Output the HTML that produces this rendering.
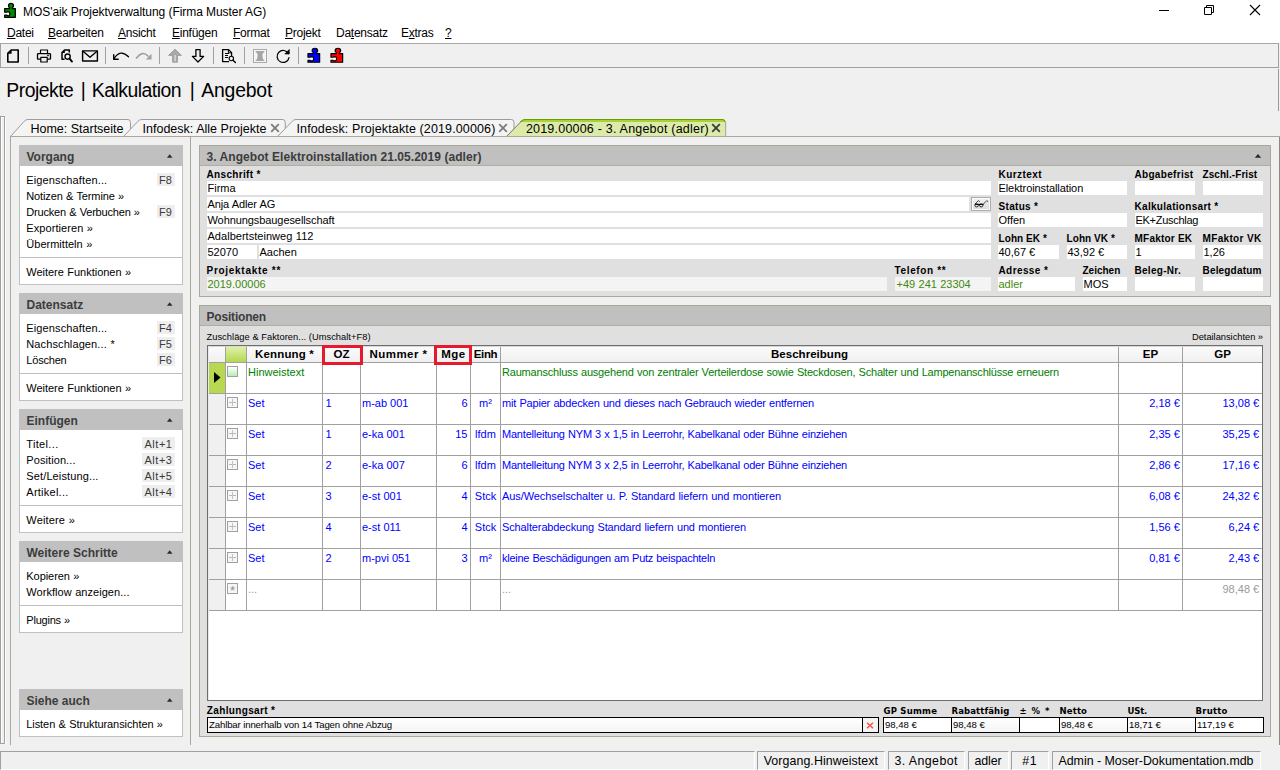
<!DOCTYPE html>
<html lang="de"><head><meta charset="utf-8"><title>MOS'aik Projektverwaltung (Firma Muster AG)</title>
<style>
html,body{margin:0;padding:0;}
body{width:1280px;height:770px;overflow:hidden;background:#f0f0f0;position:relative;font-family:"Liberation Sans",sans-serif;font-size:11px;}
#app div,#app span,#app svg{position:absolute;box-sizing:border-box;}
#app{position:absolute;left:0;top:0;width:1280px;height:770px;overflow:hidden;}
.t{white-space:nowrap;}
u{text-decoration:underline;text-underline-offset:1px;}
</style></head><body><div id="app">
<div style="left:0px;top:0px;width:1280px;height:43px;background:#ffffff;"></div>
<svg style="left:2px;top:1px" width="16" height="18" viewBox="0 0 16 18"><path d="M2.7 7.6H7.6V6.6Q6.3 5.8 6.5 4.3Q6.8 2.3 9 2.3Q11.2 2.3 11.5 4.3Q11.7 5.8 10.4 6.6V7.6H13.3V16.3H2.7V14.2H4.8Q5.3 14.9 6.2 14.9Q7.9 14.8 7.9 12.7Q7.9 10.7 6.2 10.6Q5.3 10.6 4.8 11.2H2.7Z" fill="#008a00" stroke="#000" stroke-width="1.3" stroke-linejoin="round"/></svg>
<span class="t " style="top:3.84px;font-size:12px;line-height:16px;color:#000;left:23px;letter-spacing:-0.06px;">MOS'aik Projektverwaltung (Firma Muster AG)</span>
<svg style="left:1155px;top:0px" width="120" height="24" viewBox="0 0 120 24"><path d="M4 10.5h10" stroke="#000" stroke-width="1" fill="none"/><path d="M49.5 7.5h7v7h-7z M51.5 7.5v-2h7v7h-2" stroke="#000" stroke-width="1" fill="none"/><path d="M95 5l10 10M105 5l-10 10" stroke="#000" stroke-width="1.1" fill="none"/></svg>
<span class="t " style="top:24.84px;font-size:12px;line-height:16px;color:#000;left:7px;letter-spacing:-0.25px;"><u>D</u>atei</span>
<span class="t " style="top:24.84px;font-size:12px;line-height:16px;color:#000;left:48px;letter-spacing:-0.25px;"><u>B</u>earbeiten</span>
<span class="t " style="top:24.84px;font-size:12px;line-height:16px;color:#000;left:118px;letter-spacing:-0.25px;"><u>A</u>nsicht</span>
<span class="t " style="top:24.84px;font-size:12px;line-height:16px;color:#000;left:172px;letter-spacing:-0.25px;"><u>E</u>infügen</span>
<span class="t " style="top:24.84px;font-size:12px;line-height:16px;color:#000;left:233px;letter-spacing:-0.25px;"><u>F</u>ormat</span>
<span class="t " style="top:24.84px;font-size:12px;line-height:16px;color:#000;left:285px;letter-spacing:-0.25px;"><u>P</u>rojekt</span>
<span class="t " style="top:24.84px;font-size:12px;line-height:16px;color:#000;left:336px;letter-spacing:-0.25px;">Da<u>t</u>ensatz</span>
<span class="t " style="top:24.84px;font-size:12px;line-height:16px;color:#000;left:401px;letter-spacing:-0.25px;">E<u>x</u>tras</span>
<span class="t " style="top:24.84px;font-size:12px;line-height:16px;color:#000;left:445px;letter-spacing:-0.25px;"><u>?</u></span>
<div style="left:0px;top:43px;width:1279px;height:25px;background:#f0f0f0;border:1px solid #a0a0a0;border-top-color:#a6a6a6;"></div>
<div style="left:28px;top:47px;width:1px;height:17px;background:#a0a0a0;"></div>
<div style="left:105px;top:47px;width:1px;height:17px;background:#a0a0a0;"></div>
<div style="left:159px;top:47px;width:1px;height:17px;background:#a0a0a0;"></div>
<div style="left:213px;top:47px;width:1px;height:17px;background:#a0a0a0;"></div>
<div style="left:244px;top:47px;width:1px;height:17px;background:#a0a0a0;"></div>
<div style="left:298px;top:47px;width:1px;height:17px;background:#a0a0a0;"></div>
<span class="t " style="top:78.58px;font-size:19.4px;line-height:23.4px;color:#000;left:6.3px;letter-spacing:-0.518px;">Projekte</span>
<span class="t " style="top:78.58px;font-size:19.4px;line-height:23.4px;color:#000;left:80.8px;">|</span>
<span class="t " style="top:78.58px;font-size:19.4px;line-height:23.4px;color:#000;left:91.7px;letter-spacing:-0.489px;">Kalkulation</span>
<span class="t " style="top:78.58px;font-size:19.4px;line-height:23.4px;color:#000;left:189.8px;">|</span>
<span class="t " style="top:78.58px;font-size:19.4px;line-height:23.4px;color:#000;left:201.2px;letter-spacing:-0.179px;">Angebot</span>
<div style="left:0px;top:116px;width:5px;height:628px;background:#f0f0f0;border:1px solid #a0a0a0;box-shadow:inset 1px 1px 0 #ffffff;"></div>
<div style="left:5px;top:117px;width:1px;height:627px;background:#ffffff;"></div>
<div style="left:10px;top:136px;width:1270px;height:1px;background:#aca899;"></div>
<svg style="left:10px;top:119px" width="129" height="18" viewBox="0 0 129 18"><path d="M0.5 17.5 L14.0 2.5 Q15.5 0.5 18.0 0.5 H118 Q120.5 0.5 120.5 3.5 V17.5 Z" fill="#f4f4f4" stroke="none"/><path d="M0.5 17.5 L14.0 2.5 Q15.5 0.5 18.0 0.5 H118 Q120.5 0.5 120.5 3.5 V17.5" fill="none" stroke="#9c9c9c" stroke-width="1"/><path d="M0 17.5H121" stroke="#aca899" stroke-width="1" fill="none"/></svg>
<span class="t " style="top:121.42px;font-size:12.5px;line-height:16.5px;color:#000;left:30.5px;letter-spacing:-0.006px;">Home: Startseite</span>
<svg style="left:122.5px;top:119px" width="170.75" height="18" viewBox="0 0 170.75 18"><path d="M0.5 17.5 L14.75 2.5 Q16.25 0.5 18.75 0.5 H159.75 Q162.25 0.5 162.25 3.5 V17.5 Z" fill="#f4f4f4" stroke="none"/><path d="M0.5 17.5 L14.75 2.5 Q16.25 0.5 18.75 0.5 H159.75 Q162.25 0.5 162.25 3.5 V17.5" fill="none" stroke="#9c9c9c" stroke-width="1"/><path d="M0 17.5H162.75" stroke="#aca899" stroke-width="1" fill="none"/></svg>
<span class="t " style="top:121.42px;font-size:12.5px;line-height:16.5px;color:#000;left:142.5px;letter-spacing:0.014px;">Infodesk: Alle Projekte</span>
<svg style="left:270.1px;top:123.1px" width="10" height="10" viewBox="0 0 10 10"><path d="M1.2 1.2L8.8 8.8M8.8 1.2L1.2 8.8" stroke="#7c7c7c" stroke-width="1.8" fill="none"/></svg>
<svg style="left:276.5px;top:119px" width="245.5" height="18" viewBox="0 0 245.5 18"><path d="M0.5 17.5 L15.0 2.5 Q16.5 0.5 19.0 0.5 H234.5 Q237.0 0.5 237.0 3.5 V17.5 Z" fill="#f4f4f4" stroke="none"/><path d="M0.5 17.5 L15.0 2.5 Q16.5 0.5 19.0 0.5 H234.5 Q237.0 0.5 237.0 3.5 V17.5" fill="none" stroke="#9c9c9c" stroke-width="1"/><path d="M0 17.5H237.5" stroke="#aca899" stroke-width="1" fill="none"/></svg>
<span class="t " style="top:121.42px;font-size:12.5px;line-height:16.5px;color:#000;left:296.5px;letter-spacing:0.130px;">Infodesk: Projektakte (2019.00006)</span>
<svg style="left:498.40000000000003px;top:123.1px" width="10" height="10" viewBox="0 0 10 10"><path d="M1.2 1.2L8.8 8.8M8.8 1.2L1.2 8.8" stroke="#7c7c7c" stroke-width="1.8" fill="none"/></svg>
<svg style="left:505.8px;top:119px" width="228.2" height="18" viewBox="0 0 228.2 18"><path d="M0.5 17.5 L15.099999999999966 2.5 Q16.599999999999966 0.5 19.099999999999966 0.5 H217.2 Q219.7 0.5 219.7 3.5 V17.5 Z" fill="#dcebaa" stroke="none"/><path d="M14.599999999999966 2.2 L17.099999999999966 1 H218.0 L219.79999999999998 2.6 L219.79999999999998 3 H13.799999999999965Z" fill="#a9d13c"/><path d="M0.5 17.5 L14.399999999999967 3.2" fill="none" stroke="#72727a" stroke-width="1"/><path d="M14.399999999999967 3.2 L15.099999999999966 2.5 Q16.599999999999966 0.5 19.099999999999966 0.5 H217.2 L219.39999999999998 2.6" fill="none" stroke="#6b9c00" stroke-width="1.1"/><path d="M219.7 3 V17.5" fill="none" stroke="#a2a2aa" stroke-width="1"/><path d="M0 17.5H220.2" stroke="#aca899" stroke-width="1" fill="none"/></svg>
<span class="t " style="top:121.42px;font-size:12.5px;line-height:16.5px;color:#000;left:525.9px;letter-spacing:0.209px;">2019.00006 - 3. Angebot (adler)</span>
<svg style="left:711.1px;top:123.1px" width="10" height="10" viewBox="0 0 10 10"><path d="M1.2 1.2L8.8 8.8M8.8 1.2L1.2 8.8" stroke="#3c3c3c" stroke-width="1.8" fill="none"/></svg>
<div style="left:10px;top:137px;width:1px;height:608px;background:#aca899;"></div>
<div style="left:190px;top:137px;width:1px;height:608px;background:#aca899;"></div>
<div style="left:19px;top:145px;width:164px;height:140px;background:#ffffff;border:1px solid #c0c0c0;"></div>
<div style="left:19px;top:145px;width:164px;height:21px;background:#c0c0c0;"></div>
<span class="t sbh" style="top:148.84px;font-size:12px;line-height:16px;color:#3c3c3c;font-weight:bold;left:26.5px;">Vorgang</span>
<svg style="left:164px;top:153px" width="10" height="6" viewBox="0 0 10 6"><path d="M2.9 4.7L5.7 1.3L8.5 4.7Z" fill="#2a2a2a"/></svg>
<span class="t " style="top:172.69px;font-size:11px;line-height:15px;color:#000;left:26.3px;letter-spacing:0.132px;">Eigenschaften...</span>
<div style="left:157px;top:173px;width:18px;height:13px;background:#eeeeee;"></div>
<span class="t " style="top:172.69px;font-size:11px;line-height:15px;color:#3a3a3a;right:1108px;letter-spacing:0.078px;">F8</span>
<span class="t " style="top:188.69px;font-size:11px;line-height:15px;color:#000;left:26.3px;word-spacing:0.4px;letter-spacing:-0.121px;">Notizen &amp; Termine »</span>
<span class="t " style="top:204.69px;font-size:11px;line-height:15px;color:#000;left:26.3px;word-spacing:0.4px;letter-spacing:-0.185px;">Drucken &amp; Verbuchen »</span>
<div style="left:157px;top:205px;width:18px;height:13px;background:#eeeeee;"></div>
<span class="t " style="top:204.69px;font-size:11px;line-height:15px;color:#3a3a3a;right:1108px;letter-spacing:0.078px;">F9</span>
<span class="t " style="top:220.69px;font-size:11px;line-height:15px;color:#000;left:26.3px;word-spacing:0.4px;letter-spacing:0.071px;">Exportieren »</span>
<span class="t " style="top:236.69px;font-size:11px;line-height:15px;color:#000;left:26.3px;word-spacing:0.4px;letter-spacing:0.013px;">Übermitteln »</span>
<div style="left:20px;top:257px;width:162px;height:1px;background:#c0c0c0;"></div>
<span class="t " style="top:264.69px;font-size:11px;line-height:15px;color:#000;left:26.3px;word-spacing:0.4px;letter-spacing:-0.020px;">Weitere Funktionen »</span>
<div style="left:19px;top:293px;width:164px;height:108px;background:#ffffff;border:1px solid #c0c0c0;"></div>
<div style="left:19px;top:293px;width:164px;height:21px;background:#c0c0c0;"></div>
<span class="t sbh" style="top:296.84px;font-size:12px;line-height:16px;color:#3c3c3c;font-weight:bold;left:26.5px;">Datensatz</span>
<svg style="left:164px;top:301px" width="10" height="6" viewBox="0 0 10 6"><path d="M2.9 4.7L5.7 1.3L8.5 4.7Z" fill="#2a2a2a"/></svg>
<span class="t " style="top:320.69px;font-size:11px;line-height:15px;color:#000;left:26.3px;letter-spacing:0.132px;">Eigenschaften...</span>
<div style="left:157px;top:321px;width:18px;height:13px;background:#eeeeee;"></div>
<span class="t " style="top:320.69px;font-size:11px;line-height:15px;color:#3a3a3a;right:1108px;letter-spacing:0.078px;">F4</span>
<span class="t " style="top:336.69px;font-size:11px;line-height:15px;color:#000;left:26.3px;word-spacing:0.4px;letter-spacing:0.110px;">Nachschlagen... *</span>
<div style="left:157px;top:337px;width:18px;height:13px;background:#eeeeee;"></div>
<span class="t " style="top:336.69px;font-size:11px;line-height:15px;color:#3a3a3a;right:1108px;letter-spacing:0.078px;">F5</span>
<span class="t " style="top:352.69px;font-size:11px;line-height:15px;color:#000;left:26.3px;letter-spacing:-0.192px;">Löschen</span>
<div style="left:157px;top:353px;width:18px;height:13px;background:#eeeeee;"></div>
<span class="t " style="top:352.69px;font-size:11px;line-height:15px;color:#3a3a3a;right:1108px;letter-spacing:0.078px;">F6</span>
<div style="left:20px;top:373px;width:162px;height:1px;background:#c0c0c0;"></div>
<span class="t " style="top:380.69px;font-size:11px;line-height:15px;color:#000;left:26.3px;word-spacing:0.4px;letter-spacing:-0.020px;">Weitere Funktionen »</span>
<div style="left:19px;top:409px;width:164px;height:124px;background:#ffffff;border:1px solid #c0c0c0;"></div>
<div style="left:19px;top:409px;width:164px;height:21px;background:#c0c0c0;"></div>
<span class="t sbh" style="top:412.84px;font-size:12px;line-height:16px;color:#3c3c3c;font-weight:bold;left:26.5px;">Einfügen</span>
<svg style="left:164px;top:417px" width="10" height="6" viewBox="0 0 10 6"><path d="M2.9 4.7L5.7 1.3L8.5 4.7Z" fill="#2a2a2a"/></svg>
<span class="t " style="top:436.69px;font-size:11px;line-height:15px;color:#000;left:26.3px;letter-spacing:0.338px;">Titel...</span>
<div style="left:142px;top:437px;width:33px;height:13px;background:#eeeeee;"></div>
<span class="t " style="top:436.69px;font-size:11px;line-height:15px;color:#3a3a3a;right:1107.5px;letter-spacing:0.522px;">Alt+1</span>
<span class="t " style="top:452.69px;font-size:11px;line-height:15px;color:#000;left:26.3px;letter-spacing:0.085px;">Position...</span>
<div style="left:142px;top:453px;width:33px;height:13px;background:#eeeeee;"></div>
<span class="t " style="top:452.69px;font-size:11px;line-height:15px;color:#3a3a3a;right:1107.5px;letter-spacing:0.522px;">Alt+3</span>
<span class="t " style="top:468.69px;font-size:11px;line-height:15px;color:#000;left:26.3px;letter-spacing:0.128px;">Set/Leistung...</span>
<div style="left:142px;top:469px;width:33px;height:13px;background:#eeeeee;"></div>
<span class="t " style="top:468.69px;font-size:11px;line-height:15px;color:#3a3a3a;right:1107.5px;letter-spacing:0.522px;">Alt+5</span>
<span class="t " style="top:484.69px;font-size:11px;line-height:15px;color:#000;left:26.3px;letter-spacing:0.252px;">Artikel...</span>
<div style="left:142px;top:485px;width:33px;height:13px;background:#eeeeee;"></div>
<span class="t " style="top:484.69px;font-size:11px;line-height:15px;color:#3a3a3a;right:1107.5px;letter-spacing:0.522px;">Alt+4</span>
<div style="left:20px;top:505px;width:162px;height:1px;background:#c0c0c0;"></div>
<span class="t " style="top:512.69px;font-size:11px;line-height:15px;color:#000;left:26.3px;word-spacing:0.4px;letter-spacing:0.163px;">Weitere »</span>
<div style="left:19px;top:541px;width:164px;height:92px;background:#ffffff;border:1px solid #c0c0c0;"></div>
<div style="left:19px;top:541px;width:164px;height:21px;background:#c0c0c0;"></div>
<span class="t sbh" style="top:544.84px;font-size:12px;line-height:16px;color:#3c3c3c;font-weight:bold;left:26.5px;">Weitere Schritte</span>
<svg style="left:164px;top:549px" width="10" height="6" viewBox="0 0 10 6"><path d="M2.9 4.7L5.7 1.3L8.5 4.7Z" fill="#2a2a2a"/></svg>
<span class="t " style="top:568.69px;font-size:11px;line-height:15px;color:#000;left:26.3px;word-spacing:0.4px;letter-spacing:-0.061px;">Kopieren »</span>
<span class="t " style="top:584.69px;font-size:11px;line-height:15px;color:#000;left:26.3px;word-spacing:0.4px;letter-spacing:0.044px;">Workflow anzeigen...</span>
<div style="left:20px;top:605px;width:162px;height:1px;background:#c0c0c0;"></div>
<span class="t " style="top:612.69px;font-size:11px;line-height:15px;color:#000;left:26.3px;word-spacing:0.4px;letter-spacing:-0.217px;">Plugins »</span>
<div style="left:19px;top:689px;width:164px;height:48px;background:#ffffff;border:1px solid #c0c0c0;"></div>
<div style="left:19px;top:689px;width:164px;height:21px;background:#c0c0c0;"></div>
<span class="t sbh" style="top:692.84px;font-size:12px;line-height:16px;color:#3c3c3c;font-weight:bold;left:26.5px;">Siehe auch</span>
<svg style="left:164px;top:697px" width="10" height="6" viewBox="0 0 10 6"><path d="M2.9 4.7L5.7 1.3L8.5 4.7Z" fill="#2a2a2a"/></svg>
<span class="t " style="top:716.69px;font-size:11px;line-height:15px;color:#000;left:26.3px;word-spacing:0.4px;letter-spacing:-0.078px;">Listen &amp; Strukturansichten »</span>
<div style="left:199px;top:145px;width:1072px;height:152px;background:#e0e0e0;border:1px solid #aca899;"></div>
<div style="left:200px;top:146px;width:1070px;height:19px;background:#c0c0c0;"></div>
<div style="left:200px;top:165px;width:1070px;height:1px;background:#b2ae9e;"></div>
<span class="t ph" style="top:148.84px;font-size:12px;line-height:16px;color:#3c3c3c;font-weight:bold;left:206.5px;letter-spacing:0.055px;">3. Angebot Elektroinstallation 21.05.2019 (adler)</span>
<svg style="left:1254px;top:153px" width="8" height="6" viewBox="0 0 8 6"><path d="M0.8 4.7L4 0.9L7.2 4.7Z" fill="#2a2a2a"/></svg>
<span class="t lb" style="top:167.94px;font-size:10px;line-height:14px;color:#000;font-weight:bold;left:206.5px;letter-spacing:0.340px;">Anschrift *</span>
<div style="left:207px;top:181px;width:784px;height:14px;background:#ffffff;"></div>
<span class="t " style="top:180.69px;font-size:11px;line-height:15px;color:#000;left:207.5px;">Firma</span>
<div style="left:207px;top:197px;width:762px;height:14px;background:#ffffff;"></div>
<span class="t " style="top:196.69px;font-size:11px;line-height:15px;color:#000;left:207.5px;word-spacing:0.4px;letter-spacing:-0.131px;">Anja Adler AG</span>
<div style="left:207px;top:213px;width:784px;height:14px;background:#ffffff;"></div>
<span class="t " style="top:212.69px;font-size:11px;line-height:15px;color:#000;left:207.5px;letter-spacing:-0.080px;">Wohnungsbaugesellschaft</span>
<div style="left:207px;top:229px;width:784px;height:14px;background:#ffffff;"></div>
<span class="t " style="top:228.69px;font-size:11px;line-height:15px;color:#000;left:207.5px;word-spacing:0.4px;letter-spacing:0.030px;">Adalbertsteinweg 112</span>
<div style="left:207px;top:245px;width:50px;height:14px;background:#ffffff;"></div>
<span class="t " style="top:244.69px;font-size:11px;line-height:15px;color:#000;left:207.5px;">52070</span>
<div style="left:259px;top:245px;width:732px;height:14px;background:#ffffff;"></div>
<span class="t " style="top:244.69px;font-size:11px;line-height:15px;color:#000;left:259.5px;">Aachen</span>
<span class="t lb" style="top:263.94px;font-size:10px;line-height:14px;color:#000;font-weight:bold;left:206.5px;letter-spacing:0.715px;">Projektakte **</span>
<div style="left:207px;top:277px;width:680px;height:14px;background:#f4f4f4;"></div>
<span class="t " style="top:276.69px;font-size:11px;line-height:15px;color:#428a10;left:207.5px;">2019.00006</span>
<span class="t lb" style="top:263.94px;font-size:10px;line-height:14px;color:#000;font-weight:bold;left:894.5px;letter-spacing:0.651px;">Telefon **</span>
<div style="left:895px;top:277px;width:96px;height:14px;background:#f4f4f4;"></div>
<span class="t " style="top:276.69px;font-size:11px;line-height:15px;color:#428a10;left:896.6px;word-spacing:0.4px;letter-spacing:-0.032px;">+49 241 23304</span>
<div style="left:971px;top:197px;width:20px;height:14px;border:1px solid #adadad;background:linear-gradient(#f2f2f2,#dcdcdc);box-shadow:inset 0 0 0 1px #fafafa;"></div>
<svg style="left:973px;top:199px" width="16" height="10" viewBox="0 0 16 10"><ellipse cx="3.6" cy="6.4" rx="1.7" ry="1.5" stroke="#111" stroke-width="0.9" fill="#e8e8e8"/><ellipse cx="8.2" cy="6.4" rx="1.7" ry="1.5" stroke="#111" stroke-width="0.9" fill="#e8e8e8"/><path d="M1.8 5.4H10.6" stroke="#000" stroke-width="1.1" fill="none"/><path d="M2 5L5.4 1.6L6.8 2.6M10.4 5L13.8 1.6L15.2 2.8" stroke="#333" stroke-width="0.9" fill="none"/></svg>
<span class="t lb" style="top:167.94px;font-size:10px;line-height:14px;color:#000;font-weight:bold;left:998.5px;letter-spacing:0.436px;">Kurztext</span>
<div style="left:998px;top:181px;width:129px;height:14px;background:#ffffff;"></div>
<span class="t " style="top:180.69px;font-size:11px;line-height:15px;color:#000;left:998.5px;letter-spacing:-0.080px;">Elektroinstallation</span>
<span class="t lb" style="top:167.94px;font-size:10px;line-height:14px;color:#000;font-weight:bold;left:1134.5px;letter-spacing:0.312px;">Abgabefrist</span>
<div style="left:1135px;top:181px;width:60px;height:14px;background:#ffffff;"></div>
<span class="t lb" style="top:167.94px;font-size:10px;line-height:14px;color:#000;font-weight:bold;left:1202.5px;letter-spacing:0.070px;">Zschl.-Frist</span>
<div style="left:1203px;top:181px;width:60px;height:14px;background:#ffffff;"></div>
<span class="t lb" style="top:199.94px;font-size:10px;line-height:14px;color:#000;font-weight:bold;left:998.5px;letter-spacing:0.314px;">Status *</span>
<div style="left:998px;top:213px;width:129px;height:14px;background:#ffffff;"></div>
<span class="t " style="top:212.69px;font-size:11px;line-height:15px;color:#000;left:998.5px;">Offen</span>
<span class="t lb" style="top:199.94px;font-size:10px;line-height:14px;color:#000;font-weight:bold;left:1134.5px;letter-spacing:0.299px;">Kalkulationsart *</span>
<div style="left:1135px;top:213px;width:128px;height:14px;background:#ffffff;"></div>
<span class="t " style="top:212.69px;font-size:11px;line-height:15px;color:#000;left:1135.5px;letter-spacing:-0.276px;">EK+Zuschlag</span>
<span class="t lb" style="top:231.94px;font-size:10px;line-height:14px;color:#000;font-weight:bold;left:998.5px;letter-spacing:0.080px;">Lohn EK *</span>
<div style="left:998px;top:245px;width:61px;height:14px;background:#ffffff;"></div>
<span class="t " style="top:244.69px;font-size:11px;line-height:15px;color:#000;left:998.5px;">40,67 €</span>
<span class="t lb" style="top:231.94px;font-size:10px;line-height:14px;color:#000;font-weight:bold;left:1066.5px;letter-spacing:0.080px;">Lohn VK *</span>
<div style="left:1067px;top:245px;width:60px;height:14px;background:#ffffff;"></div>
<span class="t " style="top:244.69px;font-size:11px;line-height:15px;color:#000;left:1067.5px;">43,92 €</span>
<span class="t lb" style="top:231.94px;font-size:10px;line-height:14px;color:#000;font-weight:bold;left:1134.5px;letter-spacing:0.219px;">MFaktor EK</span>
<div style="left:1135px;top:245px;width:60px;height:14px;background:#ffffff;"></div>
<span class="t " style="top:244.69px;font-size:11px;line-height:15px;color:#000;left:1135.5px;">1</span>
<span class="t lb" style="top:231.94px;font-size:10px;line-height:14px;color:#000;font-weight:bold;left:1202.5px;letter-spacing:0.344px;">MFaktor VK</span>
<div style="left:1203px;top:245px;width:60px;height:14px;background:#ffffff;"></div>
<span class="t " style="top:244.69px;font-size:11px;line-height:15px;color:#000;left:1203.5px;">1,26</span>
<span class="t lb" style="top:263.94px;font-size:10px;line-height:14px;color:#000;font-weight:bold;left:998.5px;letter-spacing:0.401px;">Adresse *</span>
<div style="left:998px;top:277px;width:77px;height:14px;background:#ffffff;"></div>
<span class="t " style="top:276.69px;font-size:11px;line-height:15px;color:#428a10;left:998.5px;">adler</span>
<span class="t lb" style="top:263.94px;font-size:10px;line-height:14px;color:#000;font-weight:bold;left:1082.5px;letter-spacing:-0.007px;">Zeichen</span>
<div style="left:1083px;top:277px;width:44px;height:14px;background:#ffffff;"></div>
<span class="t " style="top:276.69px;font-size:11px;line-height:15px;color:#000;left:1083.5px;">MOS</span>
<span class="t lb" style="top:263.94px;font-size:10px;line-height:14px;color:#000;font-weight:bold;left:1134.5px;letter-spacing:0.288px;">Beleg-Nr.</span>
<div style="left:1135px;top:277px;width:60px;height:14px;background:#ffffff;"></div>
<span class="t lb" style="top:263.94px;font-size:10px;line-height:14px;color:#000;font-weight:bold;left:1202.5px;letter-spacing:0.177px;">Belegdatum</span>
<div style="left:1203px;top:277px;width:60px;height:14px;background:#ffffff;"></div>
<div style="left:199px;top:305px;width:1072px;height:432px;background:#e0e0e0;border:1px solid #aca899;"></div>
<div style="left:200px;top:306px;width:1070px;height:19px;background:#c0c0c0;"></div>
<div style="left:200px;top:325px;width:1070px;height:1px;background:#b2ae9e;"></div>
<span class="t ph" style="top:308.84px;font-size:12px;line-height:16px;color:#3c3c3c;font-weight:bold;left:206.5px;letter-spacing:-0.184px;">Positionen</span>
<span class="t " style="top:331.13px;font-size:9.3px;line-height:13.3px;color:#000;left:206.5px;letter-spacing:0.041px;">Zuschläge &amp; Faktoren... (Umschalt+F8)</span>
<span class="t " style="top:331.13px;font-size:9.3px;line-height:13.3px;color:#000;right:17px;letter-spacing:-0.019px;">Detailansichten »</span>
<div style="left:207px;top:345px;width:1056px;height:356px;background:#ffffff;border:1px solid #6e6e6e;"></div>
<div style="left:208px;top:346px;width:1054px;height:1px;background:#d8d8d8;"></div>
<div style="left:208px;top:346px;width:1px;height:354px;background:#e8e8e8;"></div>
<div style="left:209px;top:347px;width:1053px;height:15px;background:linear-gradient(#fbfbfb,#f0f0f0);"></div>
<div style="left:226px;top:347px;width:20px;height:15px;background:linear-gradient(#dff0a8,#b4d84e);"></div>
<div style="left:209px;top:362px;width:1053px;height:1px;background:#a0a0a0;"></div>
<div style="left:225px;top:347px;width:1px;height:264px;background:#a0a0a0;"></div>
<div style="left:246px;top:347px;width:1px;height:264px;background:#a0a0a0;"></div>
<div style="left:322px;top:347px;width:1px;height:264px;background:#a0a0a0;"></div>
<div style="left:360px;top:347px;width:1px;height:264px;background:#a0a0a0;"></div>
<div style="left:436px;top:347px;width:1px;height:264px;background:#a0a0a0;"></div>
<div style="left:470px;top:347px;width:1px;height:264px;background:#a0a0a0;"></div>
<div style="left:500px;top:347px;width:1px;height:264px;background:#a0a0a0;"></div>
<div style="left:1118px;top:347px;width:1px;height:264px;background:#a0a0a0;"></div>
<div style="left:1182px;top:347px;width:1px;height:264px;background:#a0a0a0;"></div>
<div style="left:209px;top:393px;width:1053px;height:1px;background:#a0a0a0;"></div>
<div style="left:209px;top:363px;width:16px;height:30px;background:#f0f0f0;"></div>
<div style="left:209px;top:424px;width:1053px;height:1px;background:#a0a0a0;"></div>
<div style="left:209px;top:394px;width:16px;height:30px;background:#f0f0f0;"></div>
<div style="left:209px;top:455px;width:1053px;height:1px;background:#a0a0a0;"></div>
<div style="left:209px;top:425px;width:16px;height:30px;background:#f0f0f0;"></div>
<div style="left:209px;top:486px;width:1053px;height:1px;background:#a0a0a0;"></div>
<div style="left:209px;top:456px;width:16px;height:30px;background:#f0f0f0;"></div>
<div style="left:209px;top:517px;width:1053px;height:1px;background:#a0a0a0;"></div>
<div style="left:209px;top:487px;width:16px;height:30px;background:#f0f0f0;"></div>
<div style="left:209px;top:548px;width:1053px;height:1px;background:#a0a0a0;"></div>
<div style="left:209px;top:518px;width:16px;height:30px;background:#f0f0f0;"></div>
<div style="left:209px;top:579px;width:1053px;height:1px;background:#a0a0a0;"></div>
<div style="left:209px;top:549px;width:16px;height:30px;background:#f0f0f0;"></div>
<div style="left:209px;top:610px;width:1053px;height:1px;background:#a0a0a0;"></div>
<div style="left:209px;top:580px;width:16px;height:30px;background:#f0f0f0;"></div>
<div style="left:209px;top:363px;width:16px;height:30px;background:#b8d850;"></div>
<svg style="left:214px;top:372px" width="7" height="11" viewBox="0 0 7 11"><path d="M0 0L6.5 5.5L0 11Z" fill="#000"/></svg>
<span class="t " style="top:347.27px;font-size:11.5px;line-height:15.5px;color:#000;font-weight:bold;left:84.5px;width:400px;text-align:center;letter-spacing:0.167px;">Kennung *</span>
<span class="t " style="top:347.27px;font-size:11.5px;line-height:15.5px;color:#000;font-weight:bold;left:141.5px;width:400px;text-align:center;">OZ</span>
<span class="t " style="top:347.27px;font-size:11.5px;line-height:15.5px;color:#000;font-weight:bold;left:198.5px;width:400px;text-align:center;letter-spacing:0.459px;">Nummer *</span>
<span class="t " style="top:347.27px;font-size:11.5px;line-height:15.5px;color:#000;font-weight:bold;left:253.5px;width:400px;text-align:center;letter-spacing:0.467px;">Mge</span>
<span class="t " style="top:347.27px;font-size:11.5px;line-height:15.5px;color:#000;font-weight:bold;left:285.5px;width:400px;text-align:center;letter-spacing:-0.355px;">Einh</span>
<span class="t " style="top:347.27px;font-size:11.5px;line-height:15.5px;color:#000;font-weight:bold;left:609.5px;width:400px;text-align:center;letter-spacing:0.026px;">Beschreibung</span>
<span class="t " style="top:347.27px;font-size:11.5px;line-height:15.5px;color:#000;font-weight:bold;left:950.5px;width:400px;text-align:center;">EP</span>
<span class="t " style="top:347.27px;font-size:11.5px;line-height:15.5px;color:#000;font-weight:bold;left:1022.5px;width:400px;text-align:center;">GP</span>
<span class="t " style="top:364.69px;font-size:11px;line-height:15px;color:#008000;left:248px;">Hinweistext</span>
<span class="t " style="top:364.69px;font-size:11px;line-height:15px;color:#008000;left:502px;word-spacing:0.4px;letter-spacing:-0.196px;">Raumanschluss ausgehend von zentraler Verteilerdose sowie Steckdosen, Schalter und Lampenanschlüsse erneuern</span>
<div style="left:227px;top:366px;width:11px;height:11px;border:1px solid #a0a0a0;background:linear-gradient(#ffffff,#b4f0b4);"></div>
<span class="t " style="top:395.69px;font-size:11px;line-height:15px;color:#0000ff;left:248px;">Set</span>
<span class="t " style="top:395.69px;font-size:11px;line-height:15px;color:#0000ff;left:325.5px;">1</span>
<span class="t " style="top:395.69px;font-size:11px;line-height:15px;color:#0000ff;left:362px;">m-ab 001</span>
<span class="t " style="top:395.69px;font-size:11px;line-height:15px;color:#0000ff;right:812.5px;">6</span>
<span class="t " style="top:395.69px;font-size:11px;line-height:15px;color:#0000ff;left:285.5px;width:400px;text-align:center;">m²</span>
<span class="t " style="top:395.69px;font-size:11px;line-height:15px;color:#0000ff;left:502px;word-spacing:0.4px;letter-spacing:-0.181px;">mit Papier abdecken und dieses nach Gebrauch wieder entfernen</span>
<span class="t " style="top:395.69px;font-size:11px;line-height:15px;color:#0000ff;right:100.20000000000005px;">2,18 €</span>
<span class="t " style="top:395.69px;font-size:11px;line-height:15px;color:#0000ff;right:20.799999999999955px;">13,08 €</span>
<div style="left:227px;top:397px;width:11px;height:11px;background:#f6f6f6;border:1px solid #a0a0a0;"></div>
<svg style="left:229px;top:399px" width="7" height="7" viewBox="0 0 7 7"><path d="M0 3.5H7" stroke="#b9b9b9" stroke-width="1"/><path d="M3.5 0V7" stroke="#b5c4dd" stroke-width="1"/></svg>
<span class="t " style="top:426.69px;font-size:11px;line-height:15px;color:#0000ff;left:248px;">Set</span>
<span class="t " style="top:426.69px;font-size:11px;line-height:15px;color:#0000ff;left:325.5px;">1</span>
<span class="t " style="top:426.69px;font-size:11px;line-height:15px;color:#0000ff;left:362px;">e-ka 001</span>
<span class="t " style="top:426.69px;font-size:11px;line-height:15px;color:#0000ff;right:812.5px;">15</span>
<span class="t " style="top:426.69px;font-size:11px;line-height:15px;color:#0000ff;left:285.5px;width:400px;text-align:center;">lfdm</span>
<span class="t " style="top:426.69px;font-size:11px;line-height:15px;color:#0000ff;left:502px;word-spacing:0.4px;letter-spacing:-0.204px;">Mantelleitung NYM 3 x 1,5 in Leerrohr, Kabelkanal oder Bühne einziehen</span>
<span class="t " style="top:426.69px;font-size:11px;line-height:15px;color:#0000ff;right:100.20000000000005px;">2,35 €</span>
<span class="t " style="top:426.69px;font-size:11px;line-height:15px;color:#0000ff;right:20.799999999999955px;">35,25 €</span>
<div style="left:227px;top:428px;width:11px;height:11px;background:#f6f6f6;border:1px solid #a0a0a0;"></div>
<svg style="left:229px;top:430px" width="7" height="7" viewBox="0 0 7 7"><path d="M0 3.5H7" stroke="#b9b9b9" stroke-width="1"/><path d="M3.5 0V7" stroke="#b5c4dd" stroke-width="1"/></svg>
<span class="t " style="top:457.69px;font-size:11px;line-height:15px;color:#0000ff;left:248px;">Set</span>
<span class="t " style="top:457.69px;font-size:11px;line-height:15px;color:#0000ff;left:325.5px;">2</span>
<span class="t " style="top:457.69px;font-size:11px;line-height:15px;color:#0000ff;left:362px;">e-ka 007</span>
<span class="t " style="top:457.69px;font-size:11px;line-height:15px;color:#0000ff;right:812.5px;">6</span>
<span class="t " style="top:457.69px;font-size:11px;line-height:15px;color:#0000ff;left:285.5px;width:400px;text-align:center;">lfdm</span>
<span class="t " style="top:457.69px;font-size:11px;line-height:15px;color:#0000ff;left:502px;word-spacing:0.4px;letter-spacing:-0.204px;">Mantelleitung NYM 3 x 2,5 in Leerrohr, Kabelkanal oder Bühne einziehen</span>
<span class="t " style="top:457.69px;font-size:11px;line-height:15px;color:#0000ff;right:100.20000000000005px;">2,86 €</span>
<span class="t " style="top:457.69px;font-size:11px;line-height:15px;color:#0000ff;right:20.799999999999955px;">17,16 €</span>
<div style="left:227px;top:459px;width:11px;height:11px;background:#f6f6f6;border:1px solid #a0a0a0;"></div>
<svg style="left:229px;top:461px" width="7" height="7" viewBox="0 0 7 7"><path d="M0 3.5H7" stroke="#b9b9b9" stroke-width="1"/><path d="M3.5 0V7" stroke="#b5c4dd" stroke-width="1"/></svg>
<span class="t " style="top:488.69px;font-size:11px;line-height:15px;color:#0000ff;left:248px;">Set</span>
<span class="t " style="top:488.69px;font-size:11px;line-height:15px;color:#0000ff;left:325.5px;">3</span>
<span class="t " style="top:488.69px;font-size:11px;line-height:15px;color:#0000ff;left:362px;">e-st 001</span>
<span class="t " style="top:488.69px;font-size:11px;line-height:15px;color:#0000ff;right:812.5px;">4</span>
<span class="t " style="top:488.69px;font-size:11px;line-height:15px;color:#0000ff;left:285.5px;width:400px;text-align:center;">Stck</span>
<span class="t " style="top:488.69px;font-size:11px;line-height:15px;color:#0000ff;left:502px;word-spacing:0.4px;letter-spacing:-0.076px;">Aus/Wechselschalter u. P. Standard liefern und montieren</span>
<span class="t " style="top:488.69px;font-size:11px;line-height:15px;color:#0000ff;right:100.20000000000005px;">6,08 €</span>
<span class="t " style="top:488.69px;font-size:11px;line-height:15px;color:#0000ff;right:20.799999999999955px;">24,32 €</span>
<div style="left:227px;top:490px;width:11px;height:11px;background:#f6f6f6;border:1px solid #a0a0a0;"></div>
<svg style="left:229px;top:492px" width="7" height="7" viewBox="0 0 7 7"><path d="M0 3.5H7" stroke="#b9b9b9" stroke-width="1"/><path d="M3.5 0V7" stroke="#b5c4dd" stroke-width="1"/></svg>
<span class="t " style="top:519.69px;font-size:11px;line-height:15px;color:#0000ff;left:248px;">Set</span>
<span class="t " style="top:519.69px;font-size:11px;line-height:15px;color:#0000ff;left:325.5px;">4</span>
<span class="t " style="top:519.69px;font-size:11px;line-height:15px;color:#0000ff;left:362px;">e-st 011</span>
<span class="t " style="top:519.69px;font-size:11px;line-height:15px;color:#0000ff;right:812.5px;">4</span>
<span class="t " style="top:519.69px;font-size:11px;line-height:15px;color:#0000ff;left:285.5px;width:400px;text-align:center;">Stck</span>
<span class="t " style="top:519.69px;font-size:11px;line-height:15px;color:#0000ff;left:502px;word-spacing:0.4px;letter-spacing:-0.122px;">Schalterabdeckung Standard liefern und montieren</span>
<span class="t " style="top:519.69px;font-size:11px;line-height:15px;color:#0000ff;right:100.20000000000005px;">1,56 €</span>
<span class="t " style="top:519.69px;font-size:11px;line-height:15px;color:#0000ff;right:20.799999999999955px;">6,24 €</span>
<div style="left:227px;top:521px;width:11px;height:11px;background:#f6f6f6;border:1px solid #a0a0a0;"></div>
<svg style="left:229px;top:523px" width="7" height="7" viewBox="0 0 7 7"><path d="M0 3.5H7" stroke="#b9b9b9" stroke-width="1"/><path d="M3.5 0V7" stroke="#b5c4dd" stroke-width="1"/></svg>
<span class="t " style="top:550.69px;font-size:11px;line-height:15px;color:#0000ff;left:248px;">Set</span>
<span class="t " style="top:550.69px;font-size:11px;line-height:15px;color:#0000ff;left:325.5px;">2</span>
<span class="t " style="top:550.69px;font-size:11px;line-height:15px;color:#0000ff;left:362px;">m-pvi 051</span>
<span class="t " style="top:550.69px;font-size:11px;line-height:15px;color:#0000ff;right:812.5px;">3</span>
<span class="t " style="top:550.69px;font-size:11px;line-height:15px;color:#0000ff;left:285.5px;width:400px;text-align:center;">m²</span>
<span class="t " style="top:550.69px;font-size:11px;line-height:15px;color:#0000ff;left:502px;word-spacing:0.4px;letter-spacing:-0.252px;">kleine Beschädigungen am Putz beispachteln</span>
<span class="t " style="top:550.69px;font-size:11px;line-height:15px;color:#0000ff;right:100.20000000000005px;">0,81 €</span>
<span class="t " style="top:550.69px;font-size:11px;line-height:15px;color:#0000ff;right:20.799999999999955px;">2,43 €</span>
<div style="left:227px;top:552px;width:11px;height:11px;background:#f6f6f6;border:1px solid #a0a0a0;"></div>
<svg style="left:229px;top:554px" width="7" height="7" viewBox="0 0 7 7"><path d="M0 3.5H7" stroke="#b9b9b9" stroke-width="1"/><path d="M3.5 0V7" stroke="#b5c4dd" stroke-width="1"/></svg>
<div style="left:227px;top:583px;width:11px;height:11px;background:#f6f6f6;border:1px solid #a0a0a0;"></div>
<span class="t " style="top:582.4px;font-size:13px;line-height:17px;color:#8c8c9c;left:230px;">*</span>
<span class="t " style="top:581.69px;font-size:11px;line-height:15px;color:#9a9a9a;left:248px;">...</span>
<span class="t " style="top:581.69px;font-size:11px;line-height:15px;color:#9a9a9a;left:502px;">...</span>
<span class="t " style="top:581.69px;font-size:11px;line-height:15px;color:#9a9a9a;right:20.799999999999955px;">98,48 €</span>
<span class="t lb" style="top:703.93px;font-size:10px;line-height:14px;color:#000;font-weight:bold;left:206.8px;letter-spacing:0.353px;">Zahlungsart *</span>
<div style="left:207px;top:717px;width:656px;height:16px;border:1px solid #000;background:linear-gradient(#ffffff,#f4f4f4);"></div>
<span class="t " style="top:718.27px;font-size:9.6px;line-height:13.6px;color:#000;left:209px;letter-spacing:-0.125px;">Zahlbar innerhalb von 14 Tagen ohne Abzug</span>
<div style="left:862px;top:717px;width:17px;height:16px;background:#f4f4f4;border:1px solid #000;"></div>
<svg style="left:866px;top:722px" width="8" height="7" viewBox="0 0 8 7"><path d="M1 0.8L7 6.2M7 0.8L1 6.2" stroke="#ff4a3a" stroke-width="1.3" fill="none"/></svg>
<span class="t " style="top:705.11px;font-size:8.5px;line-height:12.5px;color:#000;font-weight:bold;font-family:'DejaVu Sans','Liberation Sans',sans-serif;left:883.5px;letter-spacing:0.234px;">GP Summe</span>
<div style="left:883px;top:717px;width:69px;height:16px;border:1px solid #000;background:linear-gradient(#ffffff,#ffffff);"></div>
<span class="t " style="top:718.27px;font-size:9.6px;line-height:13.6px;color:#000;left:885px;letter-spacing:-0.031px;">98,48 €</span>
<span class="t " style="top:705.11px;font-size:8.5px;line-height:12.5px;color:#000;font-weight:bold;font-family:'DejaVu Sans','Liberation Sans',sans-serif;left:951.5px;letter-spacing:0.116px;">Rabattfähig</span>
<div style="left:951px;top:717px;width:69px;height:16px;border:1px solid #000;background:linear-gradient(#ffffff,#f4f4f4);"></div>
<span class="t " style="top:718.27px;font-size:9.6px;line-height:13.6px;color:#000;left:953px;letter-spacing:-0.031px;">98,48 €</span>
<span class="t " style="top:705.11px;font-size:8.5px;line-height:12.5px;color:#000;font-weight:bold;font-family:'DejaVu Sans','Liberation Sans',sans-serif;left:1019.5px;letter-spacing:0.997px;">± % *</span>
<div style="left:1019px;top:717px;width:41px;height:16px;border:1px solid #000;background:linear-gradient(#ffffff,#ffffff);"></div>
<span class="t " style="top:705.11px;font-size:8.5px;line-height:12.5px;color:#000;font-weight:bold;font-family:'DejaVu Sans','Liberation Sans',sans-serif;left:1059.5px;letter-spacing:0.148px;">Netto</span>
<div style="left:1059px;top:717px;width:69px;height:16px;border:1px solid #000;background:linear-gradient(#ffffff,#f4f4f4);"></div>
<span class="t " style="top:718.27px;font-size:9.6px;line-height:13.6px;color:#000;left:1061px;letter-spacing:-0.031px;">98,48 €</span>
<span class="t " style="top:705.11px;font-size:8.5px;line-height:12.5px;color:#000;font-weight:bold;font-family:'DejaVu Sans','Liberation Sans',sans-serif;left:1127.5px;letter-spacing:-0.182px;">USt.</span>
<div style="left:1127px;top:717px;width:69px;height:16px;border:1px solid #000;background:linear-gradient(#ffffff,#f4f4f4);"></div>
<span class="t " style="top:718.27px;font-size:9.6px;line-height:13.6px;color:#000;left:1129px;letter-spacing:-0.031px;">18,71 €</span>
<span class="t " style="top:705.11px;font-size:8.5px;line-height:12.5px;color:#000;font-weight:bold;font-family:'DejaVu Sans','Liberation Sans',sans-serif;left:1195.5px;letter-spacing:0.249px;">Brutto</span>
<div style="left:1195px;top:717px;width:69px;height:16px;border:1px solid #000;background:linear-gradient(#ffffff,#ffffff);"></div>
<span class="t " style="top:718.27px;font-size:9.6px;line-height:13.6px;color:#000;left:1197px;letter-spacing:0.020px;">117,19 €</span>
<div style="left:1278px;top:69px;width:1px;height:42px;background:#9a9a9a;"></div>
<div style="left:1279px;top:137px;width:1px;height:608px;background:#8d8a7c;"></div>
<div style="left:0px;top:751px;width:755px;height:19px;background:#f0f0f0;border-top:1px solid #a0a0a0;border-left:1px solid #a0a0a0;border-right:1px solid #ffffff;border-bottom:1px solid #ffffff;"></div>
<div style="left:757px;top:751px;width:128px;height:19px;background:#f0f0f0;border-top:1px solid #a0a0a0;border-left:1px solid #a0a0a0;border-right:1px solid #ffffff;border-bottom:1px solid #ffffff;"></div>
<span class="t " style="top:752.5px;font-size:12.4px;line-height:16.4px;color:#000;left:763.7px;letter-spacing:0.075px;">Vorgang.Hinweistext</span>
<div style="left:888px;top:751px;width:77px;height:19px;background:#f0f0f0;border-top:1px solid #a0a0a0;border-left:1px solid #a0a0a0;border-right:1px solid #ffffff;border-bottom:1px solid #ffffff;"></div>
<span class="t " style="top:752.5px;font-size:12.4px;line-height:16.4px;color:#000;left:894.5px;letter-spacing:0.413px;">3. Angebot</span>
<div style="left:968px;top:751px;width:41px;height:19px;background:#f0f0f0;border-top:1px solid #a0a0a0;border-left:1px solid #a0a0a0;border-right:1px solid #ffffff;border-bottom:1px solid #ffffff;"></div>
<span class="t " style="top:752.5px;font-size:12.4px;line-height:16.4px;color:#000;left:974.5px;letter-spacing:-0.113px;">adler</span>
<div style="left:1011px;top:751px;width:38px;height:19px;background:#f0f0f0;border-top:1px solid #a0a0a0;border-left:1px solid #a0a0a0;border-right:1px solid #ffffff;border-bottom:1px solid #ffffff;"></div>
<span class="t " style="top:752.5px;font-size:12.4px;line-height:16.4px;color:#000;left:1022.3px;letter-spacing:0.502px;">#1</span>
<div style="left:1052px;top:751px;width:209px;height:19px;background:#f0f0f0;border-top:1px solid #a0a0a0;border-left:1px solid #a0a0a0;border-right:1px solid #ffffff;border-bottom:1px solid #ffffff;"></div>
<span class="t " style="top:752.5px;font-size:12.4px;line-height:16.4px;color:#000;left:1058.5px;letter-spacing:-0.019px;">Admin - Moser-Dokumentation.mdb</span>
<div style="left:322px;top:345px;width:41px;height:20px;border:3px solid #e8192c;"></div>
<div style="left:434px;top:345px;width:38px;height:20px;border:3px solid #e8192c;"></div>
<svg style="left:5px;top:47px" width="16" height="17" viewBox="0 0 16 17"><path d="M6.2 3H13.2V15H2.8V6.4Z" stroke="#000" fill="none" stroke-linejoin="round" stroke-linecap="round" stroke-width="1.6"/><path d="M6.6 3V6.8H2.8Z" fill="#000"/></svg>
<svg style="left:35px;top:47px" width="18" height="17" viewBox="0 0 18 17"><path d="M5.5 6V3H12.5V6" stroke="#000" fill="none" stroke-linejoin="round" stroke-linecap="round" stroke-width="1.2"/><path d="M5.3 12.2H3.2Q2.5 12.2 2.5 11.5V7.4Q2.5 6.6 3.3 6.6H14.7Q15.5 6.6 15.5 7.4V11.5Q15.5 12.2 14.8 12.2H12.7" stroke="#000" fill="none" stroke-linejoin="round" stroke-linecap="round" stroke-width="1.3"/><path d="M5.8 10.4H12.2V15H5.8Z" stroke="#000" fill="none" stroke-linejoin="round" stroke-linecap="round" stroke-width="1.2"/><rect x="12.2" y="7.8" width="1.6" height="1.4" fill="#000"/></svg>
<svg style="left:59px;top:47px" width="16" height="17" viewBox="0 0 16 17"><path d="M10.3 5V3H5.6L3 5.6V12.3H5" stroke="#000" fill="none" stroke-linejoin="round" stroke-linecap="round" stroke-width="1.5"/><path d="M5.8 3V6H3Z" fill="#000"/><circle cx="8.6" cy="9.6" r="2.6" stroke="#000" fill="none" stroke-linejoin="round" stroke-linecap="round" stroke-width="1.4"/><path d="M10.6 11.6L13 14.6" stroke="#000" fill="none" stroke-linejoin="round" stroke-linecap="round" stroke-width="1.9"/></svg>
<svg style="left:80px;top:47px" width="20" height="17" viewBox="0 0 20 17"><path d="M2.6 3.9H17.4V14H2.6Z" stroke="#000" fill="none" stroke-linejoin="round" stroke-linecap="round" stroke-width="1.4"/><path d="M3 4.3L10 10.2L17 4.3" stroke="#000" fill="none" stroke-linejoin="round" stroke-linecap="round" stroke-width="1.4"/></svg>
<svg style="left:111px;top:47px" width="20" height="17" viewBox="0 0 20 17"><path d="M3 11.6Q9.5 1.5 17.5 9.8" stroke="#000" fill="none" stroke-linejoin="round" stroke-linecap="round" stroke-width="1.3"/><path d="M2.7 7.6V12.2H7.2" stroke="#000" fill="none" stroke-linejoin="round" stroke-linecap="round" stroke-width="1.4"/></svg>
<svg style="left:134px;top:47px" width="20" height="17" viewBox="0 0 20 17"><path d="M2.5 11Q5.5 7.2 8 6.6Q11 6 14 9" stroke="#a0a0a0" stroke-width="1.7" fill="none" stroke-linecap="round"/><path d="M17.5 6.8V12.4H11.8Z" fill="#a0a0a0"/></svg>
<svg style="left:166px;top:47px" width="18" height="17" viewBox="0 0 18 17"><path d="M9 2.2L15.4 8.4H11.4V15.2H6.6V8.4H2.6Z" fill="#a8a8a8" stroke="#a0a0a0" stroke-width="1"/><path d="M8.6 8V14.2H9.6V8Z" fill="#f0f0f0"/></svg>
<svg style="left:189px;top:47px" width="18" height="17" viewBox="0 0 18 17"><path d="M6.9 2.6H11.1V9.4H14.6L9 15L3.4 9.4H6.9Z" stroke="#000" fill="none" stroke-linejoin="round" stroke-linecap="round" stroke-width="1.3" stroke-linejoin="miter"/></svg>
<svg style="left:220px;top:47px" width="18" height="17" viewBox="0 0 18 17"><path d="M2.6 2.6H8.6L11.6 5.6V8.6M2.6 2.6V14.6H8.6" stroke="#000" fill="none" stroke-linejoin="round" stroke-linecap="round" stroke-width="1.3"/><path d="M8.4 2.8V5.8H11.4" stroke="#000" fill="none" stroke-linejoin="round" stroke-linecap="round" stroke-width="1"/><path d="M4.5 6.5H9M4.5 8.5H8M4.5 10.5H7.5" stroke="#000" stroke-width="1" fill="none" shape-rendering="crispEdges"/><circle cx="11.3" cy="11.5" r="2.2" stroke="#000" fill="none" stroke-linejoin="round" stroke-linecap="round" stroke-width="1.1"/><path d="M13 13.2L15.4 15.6" stroke="#000" fill="none" stroke-linejoin="round" stroke-linecap="round" stroke-width="1.4"/></svg>
<svg style="left:251px;top:47px" width="18" height="17" viewBox="0 0 18 17"><rect x="2.5" y="2.5" width="13" height="13" fill="#f6f6f6" stroke="#a8a8a8" stroke-width="1"/><path d="M4.2 4H13.8Q11.2 6.5 11.4 9Q11.2 11.5 13.8 14H4.2Q6.8 11.5 6.6 9Q6.8 6.5 4.2 4Z" fill="#a6a6a6"/></svg>
<svg style="left:274px;top:47px" width="18" height="17" viewBox="0 0 18 17"><path d="M14.4 6.6A6 6 0 1 0 15 10.6" stroke="#000" fill="none" stroke-linejoin="round" stroke-linecap="round" stroke-width="1.25"/><path d="M15.3 2.4V7H10.8Z" fill="#000" stroke="#000" stroke-width="0.6" stroke-linejoin="round"/></svg>
<svg style="left:305px;top:46px" width="18" height="18" viewBox="0 0 18 18"><g transform="scale(1.1,1)"><circle cx="6" cy="12.7" r="1.6" fill="#fff"/><path d="M2.7 7.6H7.6V6.6Q6.3 5.8 6.5 4.3Q6.8 2.3 9 2.3Q11.2 2.3 11.5 4.3Q11.7 5.8 10.4 6.6V7.6H13.3V16.3H2.7V14.2H4.8Q5.3 14.9 6.2 14.9Q7.9 14.8 7.9 12.7Q7.9 10.7 6.2 10.6Q5.3 10.6 4.8 11.2H2.7Z" fill="#0000ff" stroke="#000" stroke-width="1.1" stroke-linejoin="round"/></g></svg>
<svg style="left:328px;top:46px" width="18" height="18" viewBox="0 0 18 18"><g transform="scale(1.1,1)"><circle cx="6" cy="12.7" r="1.6" fill="#fff"/><path d="M2.7 7.6H7.6V6.6Q6.3 5.8 6.5 4.3Q6.8 2.3 9 2.3Q11.2 2.3 11.5 4.3Q11.7 5.8 10.4 6.6V7.6H13.3V16.3H2.7V14.2H4.8Q5.3 14.9 6.2 14.9Q7.9 14.8 7.9 12.7Q7.9 10.7 6.2 10.6Q5.3 10.6 4.8 11.2H2.7Z" fill="#ff0000" stroke="#000" stroke-width="1.1" stroke-linejoin="round"/></g></svg>
</div></body></html>
